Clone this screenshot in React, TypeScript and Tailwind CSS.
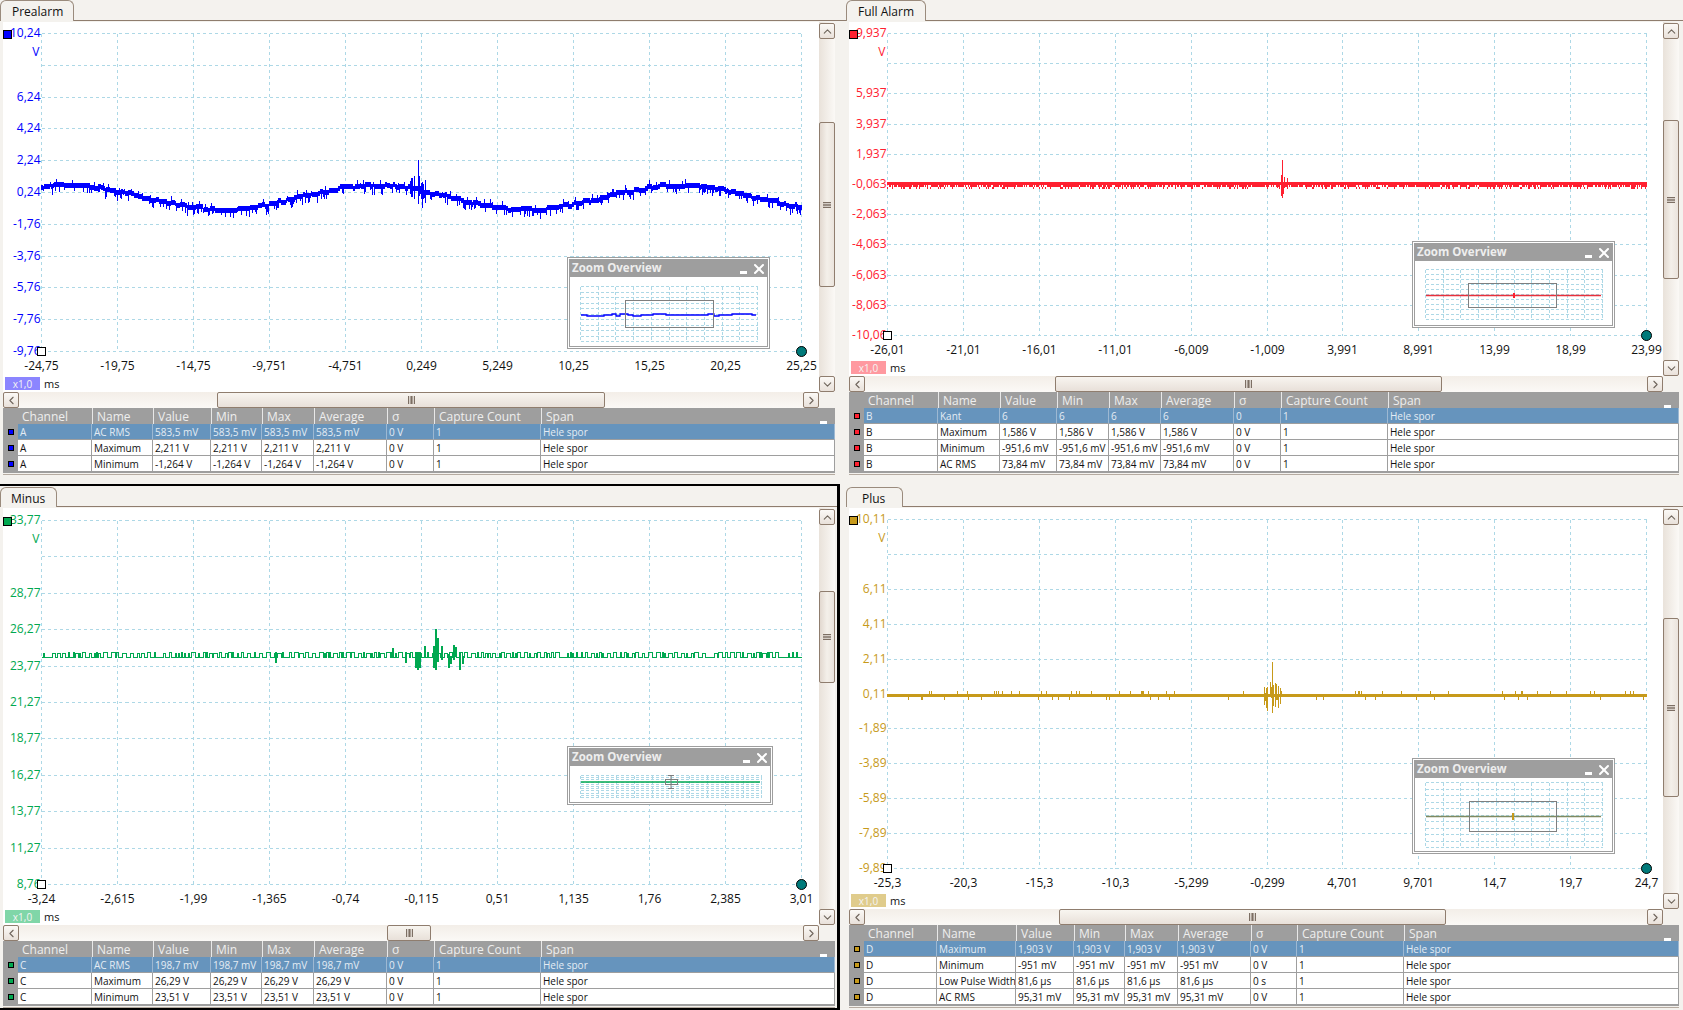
import { ChevronDown, ChevronLeft, ChevronRight, ChevronUp, X } from "lucide-react";

type Box = { x: number; y: number; w: number; h: number };
type Grid = { l: number; r: number; t: number; b: number };

interface PanelConfig {
  title: string;
  tabClass: string;
  frameClass: string;
  bodyClass: string;
  color: string;
  chipClass: string;
  markerClass: string;
  plot: Box;
  grid: Grid;
  yLabels: string[];
  xLabels: string[];
  signal: string;
  vThumbClass: string;
  hThumbClass: string;
  overviewClass: string;
  overview: Box;
  mini: Grid;
  miniBox: Grid;
  miniSignal: string;
  miniColor: string;
  miniTick?: string;
  cursor?: boolean;
  colsClass: string;
  rows: string[][];
}

const HEADERS = ["Channel", "Name", "Value", "Min", "Max", "Average", "σ", "Capture Count", "Span"];

function rng(seed: number) {
  let s = seed;
  return () => {
    s = (s * 1664525 + 1013904223) % 4294967296;
    return s / 4294967296;
  };
}

function waveA() {
  const r = rng(7);
  let d = "";
  let off = 0;
  for (let x = 41.5; x < 802; x++) {
    if (r() < 0.2) off = Math.round((r() - 0.5) * 3);
    const y = Math.round((198 - 12 * Math.cos((2 * Math.PI * (x - 70)) / 305)) / 2) * 2 + off;
    d += `M${x} ${y - 3}V${y + 2}`;
    const n = r();
    if (n < 0.2) d += `M${x} ${y}V${y + 4 + r() * 4}`;
    else if (n < 0.27) d += `M${x} ${y}V${y - 5 - r() * 2}`;
    if (x > 410 && x < 426 && r() < 0.4) d += `M${x} ${y - 6 - r() * 8}V${y + 4 + r() * 12}`;
  }
  return d + "M418.5 160V200";
}

function waveB() {
  const r = rng(21);
  let d = "";
  for (let x = 887.5; x < 1647; x++) {
    d += `M${x} 182V${r() < 0.25 ? 185 : 187}`;
    if (r() < 0.2) d += `M${x} 187V189`;
    if (x > 1276 && x < 1288 && r() < 0.6) d += `M${x} ${184 - r() * 10}V${184 + r() * 13}`;
  }
  return d + "M1282.5 160V198";
}

function waveC() {
  const r = rng(13);
  let d = "M41.5 657.5";
  let x = 41.5;
  let hi = false;
  while (x < 801) {
    const y = hi ? 652.5 + Math.round(r()) : 657.5;
    const run = !hi && r() < 0.06 ? 6 + Math.floor(r() * 6) : 1 + Math.floor(r() * 4);
    const end = Math.min(x + run, 801.5);
    d += `V${y}H${end}`;
    x = end;
    hi = !hi;
  }
  const spikes = [
    [275, 652, 663], [392, 648, 657], [405, 652, 663], [415, 652, 668], [417, 652, 670], [419, 652, 668],
    [424, 646, 657], [433, 646, 668], [435, 629, 670], [437, 638, 662], [441, 646, 660], [448, 654, 668],
    [450, 656, 664], [453, 645, 660], [455, 647, 657], [459, 652, 670], [462, 656, 664],
  ];
  for (const [sx, a, b] of spikes) d += `M${sx + 0.5} ${a}V${b}M${sx + 1.5} ${a}V${b}`;
  return d;
}

function waveD() {
  const r = rng(33);
  let d = "";
  for (let x = 887.5; x < 1647; x++) {
    d += `M${x} 694V697`;
    const n = r();
    if (n < 0.07) d += `M${x} 694V691`;
    else if (n < 0.12) d += `M${x} 697V700`;
    if (x > 1264 && x < 1281 && r() < 0.7) d += `M${x} ${695 - r() * 14}V${695 + r() * 18}`;
  }
  return d + "M1272.5 662V713";
}

function miniWave(l: number, r: number, y: number, seed: number) {
  const rand = rng(seed);
  let d = `M${l} ${y}`;
  let x = l;
  while (x < r) {
    const step = 4 + Math.floor(rand() * 10);
    d += `H${Math.min(x + step, r)}V${y + Math.round((rand() - 0.5) * 2.4)}`;
    x += step;
  }
  return d;
}

const panels: PanelConfig[] = [
  {
    title: "Prealarm",
    tabClass: "w-[74px] h-[21px] pl-[11px]",
    frameClass: "",
    bodyClass: "w-[832px] h-[453px]",
    color: "#0000ff",
    chipClass: "bg-[#8b85ff]",
    markerClass: "bg-[#0000ff]",
    plot: { x: 3, y: 22, w: 815, h: 370 },
    grid: { l: 41.5, r: 801.5, t: 33.5, b: 351.5 },
    yLabels: ["10,24", "", "6,24", "4,24", "2,24", "0,24", "-1,76", "-3,76", "-5,76", "-7,76", "-9,76"],
    xLabels: ["-24,75", "-19,75", "-14,75", "-9,751", "-4,751", "0,249", "5,249", "10,25", "15,25", "20,25", "25,25"],
    signal: waveA(),
    vThumbClass: "mt-[83px] h-[165px]",
    hThumbClass: "ml-[198px] w-[388px]",
    overviewClass: "left-[564px] top-[235px] w-[203px] h-[92px]",
    overview: { x: 567, y: 257, w: 203, h: 92 },
    mini: { l: 580.5, r: 757.5, t: 286.5, b: 341.5 },
    miniBox: { l: 625.5, r: 713.5, t: 300.5, b: 327.5 },
    miniSignal: miniWave(581, 756, 315, 5),
    miniColor: "#0000ff",
    colsClass: "grid-cols-[15px_74px_61px_58px_51px_52px_73px_47px_107px_1fr]",
    rows: [
      ["A", "AC RMS", "583,5 mV", "583,5 mV", "583,5 mV", "583,5 mV", "0 V", "1", "Hele spor"],
      ["A", "Maximum", "2,211 V", "2,211 V", "2,211 V", "2,211 V", "0 V", "1", "Hele spor"],
      ["A", "Minimum", "-1,264 V", "-1,264 V", "-1,264 V", "-1,264 V", "0 V", "1", "Hele spor"],
    ],
  },
  {
    title: "Full Alarm",
    tabClass: "w-[80px] h-[21px] pl-[11px]",
    frameClass: "",
    bodyClass: "w-[830px] h-[453px]",
    color: "#ff2030",
    chipClass: "bg-[#ff99a0]",
    markerClass: "bg-[#ff2030]",
    plot: { x: 849, y: 22, w: 814, h: 354 },
    grid: { l: 887.5, r: 1646.5, t: 33.5, b: 335.5 },
    yLabels: ["9,937", "", "5,937", "3,937", "1,937", "-0,063", "-2,063", "-4,063", "-6,063", "-8,063", "-10,06"],
    xLabels: ["-26,01", "-21,01", "-16,01", "-11,01", "-6,009", "-1,009", "3,991", "8,991", "13,99", "18,99", "23,99"],
    signal: waveB(),
    vThumbClass: "mt-[81px] h-[159px]",
    hThumbClass: "ml-[190px] w-[387px]",
    overviewClass: "left-[563px] top-[219px] w-[203px] h-[87px]",
    overview: { x: 1412, y: 241, w: 203, h: 87 },
    mini: { l: 1425.5, r: 1602.5, t: 269.5, b: 319.5 },
    miniBox: { l: 1468.5, r: 1556.5, t: 283.5, b: 307.5 },
    miniSignal: "M1426 295.5H1601",
    miniColor: "#e8303c",
    miniTick: "M1514 293V298",
    colsClass: "grid-cols-[15px_74px_62px_57px_52px_52px_73px_47px_107px_1fr]",
    rows: [
      ["B", "Kant", "6", "6", "6", "6", "0", "1", "Hele spor"],
      ["B", "Maximum", "1,586 V", "1,586 V", "1,586 V", "1,586 V", "0 V", "1", "Hele spor"],
      ["B", "Minimum", "-951,6 mV", "-951,6 mV", "-951,6 mV", "-951,6 mV", "0 V", "1", "Hele spor"],
      ["B", "AC RMS", "73,84 mV", "73,84 mV", "73,84 mV", "73,84 mV", "0 V", "1", "Hele spor"],
    ],
  },
  {
    title: "Minus",
    tabClass: "w-[57px] h-[20px] pl-[10px]",
    frameClass: "w-[840px] border-t-2 border-r-[3px] border-b-2 border-black",
    bodyClass: "w-[832px] h-[500px]",
    color: "#00a850",
    chipClass: "bg-[#80d6a8]",
    markerClass: "bg-[#00a850]",
    plot: { x: 3, y: 508, w: 815, h: 417 },
    grid: { l: 41.5, r: 801.5, t: 520.5, b: 884.5 },
    yLabels: ["33,77", "", "28,77", "26,27", "23,77", "21,27", "18,77", "16,27", "13,77", "11,27", "8,76"],
    xLabels: ["-3,24", "-2,615", "-1,99", "-1,365", "-0,74", "-0,115", "0,51", "1,135", "1,76", "2,385", "3,01"],
    signal: waveC(),
    vThumbClass: "mt-[66px] h-[92px]",
    hThumbClass: "ml-[368px] w-[44px]",
    overviewClass: "left-[564px] top-[238px] w-[206px] h-[59px]",
    overview: { x: 567, y: 746, w: 206, h: 59 },
    mini: { l: 580.5, r: 761.5, t: 775.5, b: 797.5 },
    miniBox: { l: 665.5, r: 677.5, t: 779.5, b: 784.5 },
    miniSignal: "M581 782H760",
    miniColor: "#00a850",
    cursor: true,
    colsClass: "grid-cols-[15px_74px_61px_58px_51px_52px_73px_47px_107px_1fr]",
    rows: [
      ["C", "AC RMS", "198,7 mV", "198,7 mV", "198,7 mV", "198,7 mV", "0 V", "1", "Hele spor"],
      ["C", "Maximum", "26,29 V", "26,29 V", "26,29 V", "26,29 V", "0 V", "1", "Hele spor"],
      ["C", "Minimum", "23,51 V", "23,51 V", "23,51 V", "23,51 V", "0 V", "1", "Hele spor"],
    ],
  },
  {
    title: "Plus",
    tabClass: "w-[57px] h-[20px] mt-[1px] pl-[15px]",
    frameClass: "pt-[2px]",
    bodyClass: "w-[830px] h-[500px]",
    color: "#c79a1a",
    chipClass: "bg-[#e0cc8c]",
    markerClass: "bg-[#c79a1a]",
    plot: { x: 849, y: 508, w: 814, h: 401 },
    grid: { l: 887.5, r: 1646.5, t: 519.5, b: 868.5 },
    yLabels: ["10,11", "", "6,11", "4,11", "2,11", "0,11", "-1,89", "-3,89", "-5,89", "-7,89", "-9,89"],
    xLabels: ["-25,3", "-20,3", "-15,3", "-10,3", "-5,299", "-0,299", "4,701", "9,701", "14,7", "19,7", "24,7"],
    signal: waveD(),
    vThumbClass: "mt-[93px] h-[179px]",
    hThumbClass: "ml-[194px] w-[387px]",
    overviewClass: "left-[563px] top-[250px] w-[203px] h-[96px]",
    overview: { x: 1412, y: 758, w: 203, h: 96 },
    mini: { l: 1425.5, r: 1602.5, t: 782.5, b: 847.5 },
    miniBox: { l: 1469.5, r: 1556.5, t: 801.5, b: 831.5 },
    miniSignal: "M1426 816.5H1601",
    miniColor: "#7f8a60",
    miniTick: "M1513 813V820",
    colsClass: "grid-cols-[15px_73px_79px_58px_51px_53px_73px_46px_107px_1fr]",
    rows: [
      ["D", "Maximum", "1,903 V", "1,903 V", "1,903 V", "1,903 V", "0 V", "1", "Hele spor"],
      ["D", "Minimum", "-951 mV", "-951 mV", "-951 mV", "-951 mV", "0 V", "1", "Hele spor"],
      ["D", "Low Pulse Width", "81,6 µs", "81,6 µs", "81,6 µs", "81,6 µs", "0 s", "1", "Hele spor"],
      ["D", "AC RMS", "95,31 mV", "95,31 mV", "95,31 mV", "95,31 mV", "0 V", "1", "Hele spor"],
    ],
  },
];

function steps(a: number, b: number, n: number) {
  return Array.from({ length: n + 1 }, (_, i) => a + ((b - a) * i) / n);
}

function ScrollButton({ children }: { children: React.ReactNode }) {
  return (
    <div className="flex h-[16px] w-[16px] shrink-0 items-center justify-center rounded-[2px] border border-[#8f7d6e] bg-linear-to-b from-[#fbf9f6] to-[#e9e1da] text-[#6f655c]">
      {children}
    </div>
  );
}

function VerticalScroll({ thumb }: { thumb: string }) {
  return (
    <div className="flex w-[16px] shrink-0 flex-col pt-px bg-linear-to-r from-[#e9e2da] to-[#fbf9f6]">
      <ScrollButton>
        <ChevronUp size={13} strokeWidth={2} />
      </ScrollButton>
      <div className="relative min-h-0 flex-1">
        <div className={`${thumb} flex w-[16px] items-center justify-center rounded-[2px] border border-[#8f7d6e] bg-linear-to-r from-[#e2d8cf] via-[#f4f0ea] to-[#ebe4dd]`}>
          <div className="h-[6px] w-[8px] border-y border-[#7d6f64] bg-linear-to-b from-transparent via-[#7d6f64] to-transparent" />
        </div>
      </div>
      <ScrollButton>
        <ChevronDown size={13} strokeWidth={2} />
      </ScrollButton>
    </div>
  );
}

function HorizontalScroll({ thumb }: { thumb: string }) {
  return (
    <div className="flex h-[16px] shrink-0 pr-[16px]">
      <div className="flex min-w-0 flex-1 bg-linear-to-b from-[#f3eee8] to-[#fbf9f6]">
        <ScrollButton>
          <ChevronLeft size={13} strokeWidth={2} />
        </ScrollButton>
        <div className="min-w-0 flex-1">
          <div className={`${thumb} flex h-[16px] items-center justify-center rounded-[2px] border border-[#8f7d6e] bg-linear-to-b from-[#f8f5f0] to-[#e8e0d9]`}>
            <div className="h-[8px] w-[7px] border-x border-[#7d6f64] bg-linear-to-r from-transparent via-[#7d6f64] to-transparent" />
          </div>
        </div>
        <ScrollButton>
          <ChevronRight size={13} strokeWidth={2} />
        </ScrollButton>
      </div>
    </div>
  );
}

function ZoomOverview({ p }: { p: PanelConfig }) {
  const { overview: o, mini: m, miniBox: b } = p;
  const vb = { x: o.x + 3, y: o.y + 20, w: o.w - 6, h: o.h - 23 };
  return (
    <div className={`absolute ${p.overviewClass} border border-[#9e9e9e] bg-white p-px`}>
      <div className="flex h-full flex-col border border-[#9e9e9e]">
        <div className="flex h-[17px] shrink-0 items-center bg-[#9e9e9e] pb-[2px] pl-[2px] text-[11.5px] font-bold leading-none text-[#eeeeee]">
          <span className="flex-1 whitespace-nowrap">Zoom Overview</span>
          <span className="mr-[4px] mt-[10px] h-[3px] w-[7px] bg-white" />
          <X size={16} strokeWidth={3} className="mt-[2px] text-white" />
        </div>
        <svg width={vb.w} height={vb.h} viewBox={`${vb.x} ${vb.y} ${vb.w} ${vb.h}`} className="block">
          <g stroke="#add8e6" strokeWidth={1} strokeDasharray="3 2" shapeRendering="crispEdges">
            {steps(m.t, m.b, 10).map((y) => (
              <line key={y} x1={m.l} x2={m.r} y1={y} y2={y} />
            ))}
            {steps(m.l, m.r, 10).map((x) => (
              <line key={x} x1={x} x2={x} y1={m.t} y2={m.b} />
            ))}
          </g>
          <path d={p.miniSignal} stroke={p.miniColor} strokeWidth={1.3} fill="none" />
          {p.miniTick && <path d={p.miniTick} stroke={p.color} strokeWidth={2} fill="none" />}
          <rect x={b.l} y={b.t} width={b.r - b.l} height={b.b - b.t} fill="none" stroke="#7f7f7f" strokeWidth={1} />
          {p.cursor && (
            <path d="M668 775.5H674M671 775.5V788.5M668 788.5H674" stroke="#7f7f7f" strokeWidth={1} fill="none" />
          )}
        </svg>
      </div>
    </div>
  );
}

function Chart({ p }: { p: PanelConfig }) {
  const { plot, grid } = p;
  const ys = steps(grid.t, grid.b, 10).map((y) => Math.floor(y) + 0.5);
  const xs = steps(grid.l, grid.r, 10).map((x) => Math.floor(x) + 0.5);
  return (
    <div className="relative min-w-0 flex-1 overflow-hidden bg-white">
      <svg width={plot.w} height={plot.h} viewBox={`${plot.x} ${plot.y} ${plot.w} ${plot.h}`} className="block text-[12px]">
        <g stroke="#add8e6" strokeWidth={1} strokeDasharray="3 3" shapeRendering="crispEdges">
          {ys.map((y) => (
            <line key={y} x1={grid.l} x2={grid.r} y1={y} y2={y} />
          ))}
          {xs.map((x) => (
            <line key={x} x1={x} x2={x} y1={grid.t} y2={grid.b} />
          ))}
        </g>
        <path d={p.signal} stroke={p.color} strokeWidth={1} fill="none" shapeRendering="crispEdges" />
        <g fill={p.color} textAnchor="end">
          {p.yLabels.map((t, i) => (
            <text key={i} x={grid.l - 1} y={ys[i] + 3}>
              {t}
            </text>
          ))}
          <text x={grid.l - 2} y={grid.t + 22}>
            V
          </text>
        </g>
        <g fill="#111111" textAnchor="middle">
          {p.xLabels.map((t, i) => (
            <text key={i} x={xs[i]} y={grid.b + 18}>
              {t}
            </text>
          ))}
        </g>
        <rect x={plot.x + 0.5} y={grid.t - 3} width={8} height={8} fill={p.color} stroke="#000" strokeWidth={1} />
        <rect x={grid.l - 4} y={grid.b - 4} width={8} height={8} fill="#fff" stroke="#000" strokeWidth={1} />
        <circle cx={grid.r} cy={grid.b} r={5} fill="#007a7a" stroke="#000" strokeWidth={1} />
      </svg>
      <div className="absolute bottom-[2px] left-[2px] flex h-[13px] items-center gap-[4px] text-[11px] leading-none text-[#111111]">
        <span className={`flex h-[13px] w-[35px] items-center justify-center text-[10px] text-[#f4f4f4] ${p.chipClass}`}>x1,0</span>
        <span>ms</span>
      </div>
      <ZoomOverview p={p} />
    </div>
  );
}

function MeasureTable({ p }: { p: PanelConfig }) {
  return (
    <div className="shrink-0 bg-[#9e9e9e] pb-px text-[10px] leading-none">
      <div className={`relative grid h-[16px] ${p.colsClass} text-[12px] text-[#eeeeee]`}>
        <div />
        {HEADERS.map((h, i) => (
          <div key={h} className={`flex items-center whitespace-nowrap pl-[4px] pt-[2px] ${i > 0 ? "border-l border-[#e8e8e8]" : ""}`}>
            {h}
          </div>
        ))}
        <span className="absolute right-[8px] top-[13px] h-[3px] w-[7px] bg-white" />
      </div>
      {p.rows.map((row, r) => (
        <div key={r} className={`grid h-[16px] ${p.colsClass}`}>
          <div className="flex items-center justify-center">
            <span className={`h-[6px] w-[6px] border border-black ${p.markerClass}`} />
          </div>
          {row.map((c, i) => (
            <div
              key={i}
              className={`flex items-center overflow-hidden whitespace-nowrap border-b border-r pl-[2px] ${
                r === 0 ? "border-[#9db8d2] border-b-[#9e9e9e] bg-[#6694bd] text-[#e4ecf4]" : "border-[#9e9e9e] bg-white text-[#111111]"
              }`}
            >
              {c}
            </div>
          ))}
        </div>
      ))}
    </div>
  );
}

function ScopePanel({ p }: { p: PanelConfig }) {
  return (
    <div className={`flex h-full flex-col bg-[#f4f2ee] ${p.frameClass}`}>
      <div className="mb-px flex h-[21px] shrink-0 items-end">
        <div className={`flex shrink-0 items-center rounded-t-[6px] border-x border-t border-[#9a8b7d] bg-[#f4f2ee] pt-[2px] text-[12px] leading-none text-[#111111] ${p.tabClass}`}>
          {p.title}
        </div>
        <div className="h-px flex-1 bg-[#8f7d6e]" />
      </div>
      <div className={`ml-[3px] flex shrink-0 flex-col ${p.bodyClass}`}>
        <div className="flex min-h-0 flex-1">
          <Chart p={p} />
          <VerticalScroll thumb={p.vThumbClass} />
        </div>
        <HorizontalScroll thumb={p.hThumbClass} />
        <MeasureTable p={p} />
        <div className="h-[2px] shrink-0 border-b border-[#b5aba1]" />
      </div>
    </div>
  );
}

export default function App() {
  return (
    <div className="grid h-[1010px] w-[1683px] grid-cols-[846px_837px] grid-rows-[484px_526px] overflow-hidden bg-[#f4f2ee] font-['Open_Sans',sans-serif]">
      {panels.map((p) => (
        <ScopePanel key={p.title} p={p} />
      ))}
    </div>
  );
}
